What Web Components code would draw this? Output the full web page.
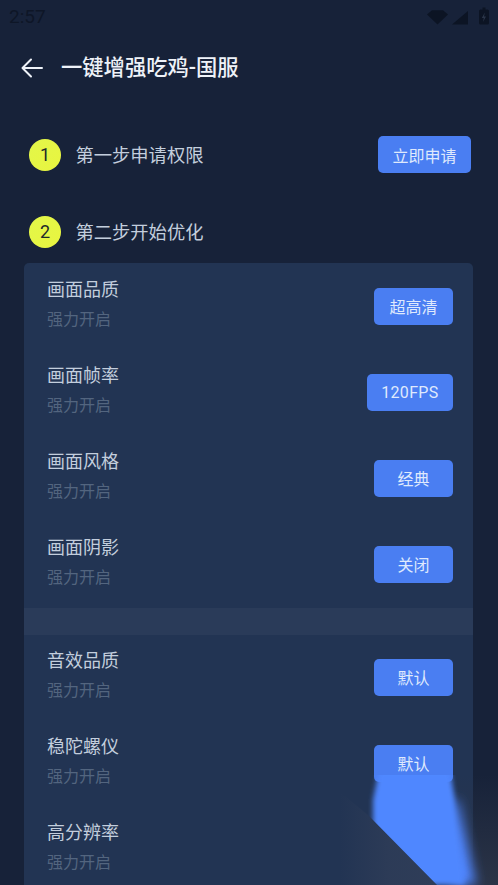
<!DOCTYPE html>
<html lang="zh">
<head>
<meta charset="utf-8">
<title>一键增强吃鸡-国服</title>
<style>
  html, body { margin: 0; padding: 0; background: #172239; }
  body { width: 498px; height: 885px; overflow: hidden; font-family: Roboto, "Noto Sans CJK SC", sans-serif; }
</style>
</head>
<body>
<app-page>
  <status-bar></status-bar>
  <app-header>一键增强吃鸡-国服</app-header>
  <step-row num="1" label="第一步申请权限" action="立即申请"></step-row>
  <step-row num="2" label="第二步开始优化"></step-row>
  <settings-card>
    <setting-row title="画面品质" sub="强力开启" value="超高清"></setting-row>
    <setting-row title="画面帧率" sub="强力开启" value="120FPS" wide></setting-row>
    <setting-row title="画面风格" sub="强力开启" value="经典"></setting-row>
    <setting-row title="画面阴影" sub="强力开启" value="关闭"></setting-row>
    <card-gap></card-gap>
    <setting-row title="音效品质" sub="强力开启" value="默认" style="margin-top:-1px"></setting-row>
    <setting-row title="稳陀螺仪" sub="强力开启" value="默认"></setting-row>
    <setting-row title="高分辨率" sub="强力开启"></setting-row>
  </settings-card>
  <corner-curl></corner-curl>
</app-page>

<script>
  const FONT = 'Roboto, "Noto Sans CJK SC", sans-serif';

  // small helper, every element here is just a shadow root with fixed markup
  function shadow(el, html) {
    el.attachShadow({ mode: "open" }).innerHTML = html;
  }

  class AppPage extends HTMLElement {
    constructor() {
      super();
      shadow(this, `
        <style>
          :host { display: block; position: relative; width: 498px; height: 885px; overflow: hidden;
                  background: #172239; font-family: ${FONT}; }
        </style>
        <slot></slot>`);
    }
  }

  class StatusBar extends HTMLElement {
    constructor() {
      super();
      shadow(this, `
        <style>
          :host { display: flex; align-items: center; justify-content: space-between; height: 34px;
                  padding: 0 9px 0 9px; color: #0e1627; }
          .time { font-size: 19px; line-height: 34px; }
          svg { display: block; }
        </style>
        <span class="time">2:57</span>
        <svg width="64" height="20" viewBox="0 0 64 20">
          <path fill="#0c1424" d="M2 7.500L7 3.200h11L23 7.500L12.500 17.500z"/>
          <path fill="#0c1424" d="M27 17.500L43 4v13.500z"/>
          <path fill="#0c1424" d="M55.500 2.500h2V.5h3v2h2a1.500 1.500 0 0 1 1.500 1.500v12a1.500 1.500 0 0 1-1.500 1.500h-7a1.500 1.500 0 0 1-1.500-1.500V4a1.500 1.500 0 0 1 1.500-1.500z"/>
          <path fill="#2a3549" d="M59.800 5.500l-3 5.500h2l-.8 4 3-5.500h-2z"/>
        </svg>`);
    }
  }

  class AppHeader extends HTMLElement {
    constructor() {
      super();
      shadow(this, `
        <style>
          :host { display: flex; align-items: center; height: 68px; margin-bottom: 14px; padding-left: 21px; color: #eef2f8; }
          svg { display: block; flex: none; margin-right: 18px; }
          .t { font-size: 21.300px; font-weight: 500; line-height: 68px; }
        </style>
        <svg width="22" height="22" viewBox="0 0 22 22" fill="none" stroke="#eef2f8" stroke-width="2" stroke-linecap="round" stroke-linejoin="round">
          <path d="M21 11H2M10 2.500L1.500 11l8.500 8.500"/>
        </svg>
        <span class="t"><slot></slot></span>`);
    }
  }

  class ActionButton extends HTMLElement {
    constructor() {
      super();
      shadow(this, `
        <style>
          :host { display: inline-flex; align-items: center; justify-content: center; box-sizing: border-box;
                  height: 37px; min-width: 79px; padding: 0 14.500px; border-radius: 5px; background: #4a7ef2;
                  color: #dfe9fd; font-size: 16px; white-space: nowrap; }
        </style>
        <slot></slot>`);
    }
  }

  class StepRow extends HTMLElement {
    constructor() {
      super();
      const action = this.getAttribute("action");
      shadow(this, `
        <style>
          :host { display: flex; align-items: center; height: 77px; padding: 0 27px 0 29px; color: #c3cedd; }
          .num { width: 32px; height: 32px; border-radius: 50%; flex: none; margin-right: 15px;
                 display: flex; align-items: center; justify-content: center;
                 background: linear-gradient(135deg, #e2f74a, #e9f53f); color: #1f2a2a; font-size: 18px; }
          .label { flex: 1; font-size: 18.300px; margin: -2px 0 0 -.5px; }
        </style>
        <span class="num">${this.getAttribute("num")}</span>
        <span class="label">${this.getAttribute("label")}</span>
        ${action ? `<action-button>${action}</action-button>` : ""}`);
    }
  }

  class SettingsCard extends HTMLElement {
    constructor() {
      super();
      shadow(this, `
        <style>
          :host { display: block; margin: -7px 25px 0 24px; border-radius: 5px 5px 0 0; background: #223453; }
        </style>
        <slot></slot>`);
    }
  }

  class CardGap extends HTMLElement {
    constructor() {
      super();
      shadow(this, `<style>:host { display: block; height: 27px; margin-top: 1px; background: #2a3b59; }</style>`);
    }
  }

  class SettingRow extends HTMLElement {
    constructor() {
      super();
      const value = this.getAttribute("value");
      const wide = this.hasAttribute("wide") ? ' style="letter-spacing:.3px;padding:0 14.500px"' : "";
      shadow(this, `
        <style>
          :host { display: flex; align-items: center; justify-content: space-between; height: 86px;
                  padding: 0 20px 0 23px; }
          .text { display: flex; flex-direction: column; margin-top: -4px; }
          .title { font-size: 18px; line-height: 26px; color: #c3cedd; }
          .sub { font-size: 16px; line-height: 24px; margin-top: 5px; color: #53657f; }
        </style>
        <div class="text">
          <span class="title">${this.getAttribute("title")}</span>
          <span class="sub">${this.getAttribute("sub")}</span>
        </div>
        ${value ? `<action-button${wide}>${value}</action-button>` : ""}`);
    }
  }

  // the torn blue corner that lies over the bottom right of the picture
  // svg coordinates are page coordinates, the viewBox starts at 340,760
  class CornerCurl extends HTMLElement {
    constructor() {
      super();
      shadow(this, `
        <style>
          :host { position: absolute; left: 340px; top: 760px; width: 158px; height: 125px; pointer-events: none; }
          svg { display: block; }
        </style>
        <svg width="158" height="125" viewBox="340 760 158 125">
          <defs>
            <filter id="soft" x="-30%" y="-30%" width="160%" height="160%"><feGaussianBlur stdDeviation="2.500"/></filter>
            <filter id="wide" x="-100%" y="-30%" width="300%" height="160%"><feGaussianBlur stdDeviation="6"/></filter>
            <clipPath id="cut"><path d="M340 775H498V885H437L368 815H340z"/></clipPath>
            <linearGradient id="shade" x1="0" y1="0" x2="0" y2="1">
              <stop offset="0" stop-color="#2b3447" stop-opacity="0"/>
              <stop offset="1" stop-color="#2b3447"/>
            </linearGradient>
            <linearGradient id="under" x1="0" y1="0" x2="1" y2="0">
              <stop offset="0" stop-color="#2f3d58" stop-opacity="0"/>
              <stop offset=".5" stop-color="#2f3d58" stop-opacity=".8"/>
              <stop offset="1" stop-color="#2f3d58"/>
            </linearGradient>
          </defs>
          <path d="M453 775H498V885H453z" fill="url(#shade)"/>
          <path d="M340 792L368 815L437 885H340z" fill="url(#under)"/>
          <g clip-path="url(#cut)">
            <path d="M453 800H458L476 885H452z" fill="#4f85ff" filter="url(#wide)"/>
            <path d="M379 770H450L455 800L465 885H400L373 825V800z" fill="#5087ff" filter="url(#soft)"/>
          </g>
        </svg>`);
    }
  }

  customElements.define("app-page", AppPage);
  customElements.define("status-bar", StatusBar);
  customElements.define("app-header", AppHeader);
  customElements.define("action-button", ActionButton);
  customElements.define("step-row", StepRow);
  customElements.define("settings-card", SettingsCard);
  customElements.define("card-gap", CardGap);
  customElements.define("setting-row", SettingRow);
  customElements.define("corner-curl", CornerCurl);
</script>
</body>
</html>
